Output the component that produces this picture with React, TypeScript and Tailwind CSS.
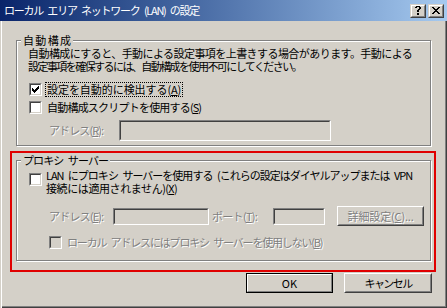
import React from "react";

// pixel glyphs for the classic check mark and caption buttons
const CHECK = ["......X", ".....XX", "X...XXX", "XX.XXX.", "XXXXX..", ".XXX...", "..X...."];
const CLOSE = ["XX....XX", ".XX..XX.", "..XXXX..", "...XX...", "..XXXX..", ".XX..XX.", "XX....XX"];
const HELP = [".XXXX.", "XX..XX", "....XX", "...XX.", "..XX..", "..XX..", "......", "..XX..", "..XX.."];

const Pixels = ({ rows }: { rows: string[] }) => (
  <svg width={rows[0].length} height={rows.length} shapeRendering="crispEdges">
    {rows.flatMap((r, y) =>
      r.split("").map((c, x) =>
        c === "X" ? <rect key={x + "-" + y} x={x} y={y} width={1} height={1} fill="#000" /> : null,
      ),
    )}
  </svg>
);

const Checkbox = ({ checked, disabled }: { checked?: boolean; disabled?: boolean }) => (
  <div className="h-[13px] w-[13px] shrink-0 border border-t-[#808080] border-l-[#808080] border-r-white border-b-white">
    <div
      className={
        "flex h-full w-full items-center justify-center border border-t-[#404040] border-l-[#404040] border-r-[#d4d0c8] border-b-[#d4d0c8] " +
        (disabled ? "bg-[#d4d0c8]" : "bg-white")
      }
    >
      {checked && <Pixels rows={CHECK} />}
    </div>
  </div>
);

const Edit = ({ className }: { className: string }) => (
  <div className={"shrink-0 border border-t-[#808080] border-l-[#808080] border-r-white border-b-white " + className}>
    <div className="h-full w-full border border-t-[#404040] border-l-[#404040] border-r-[#d4d0c8] border-b-[#d4d0c8] bg-[#d4d0c8]" />
  </div>
);

const Button = ({
  children,
  isDefault,
  className,
}: {
  children: React.ReactNode;
  isDefault?: boolean;
  className: string;
}) =>
  isDefault ? (
    <div className={"shrink-0 border border-black " + className}>
      <div className="h-full w-full border border-t-white border-l-white border-r-[#808080] border-b-[#808080]">
        <div className="flex h-full w-full items-center justify-center">{children}</div>
      </div>
    </div>
  ) : (
    <div className={"shrink-0 border border-t-white border-l-white border-r-[#404040] border-b-[#404040] " + className}>
      <div className="flex h-full w-full items-center justify-center border border-t-[#d4d0c8] border-l-[#d4d0c8] border-r-[#808080] border-b-[#808080]">
        {children}
      </div>
    </div>
  );

const CaptionButton = ({ children }: { children: React.ReactNode }) => (
  <div className="h-[14px] w-[16px] border border-t-[#d4d0c8] border-l-[#d4d0c8] border-r-[#404040] border-b-[#404040] bg-[#d4d0c8]">
    <div className="flex h-full w-full items-center justify-center border border-t-white border-l-white border-r-[#808080] border-b-[#808080]">
      {children}
    </div>
  </div>
);

const Group = ({
  label,
  className,
  children,
}: {
  label: React.ReactNode;
  className: string;
  children: React.ReactNode;
}) => (
  <div className={"relative border border-[#808080] shadow-[inset_1px_1px_0_#fff,1px_1px_0_#fff] " + className}>
    <div className="absolute left-[4px] top-[-7px] bg-[#d4d0c8] px-[2px] leading-[13px]">{label}</div>
    {children}
  </div>
);

export default function App() {
  return (
    <div className="flex h-[308px] w-[447px] flex-col bg-[#d4d0c8] font-['Noto_Sans_CJK_JP','Noto_Sans_CJK_SC',sans-serif] text-[11px] text-black">
      <div className="flex h-[21px] shrink-0 items-center bg-linear-to-r from-[#0a246a] to-[#a6caf0] pl-[4px] pr-[3px]">
        <div className="w-[195px] whitespace-nowrap leading-[13px] tracking-[-1.3px] text-white [word-spacing:3px] [text-align-last:justify]">
          ローカル エリア ネットワーク (LAN) の設定
        </div>
        <div className="ml-auto flex gap-[2px]">
          <CaptionButton>
            <Pixels rows={HELP} />
          </CaptionButton>
          <CaptionButton>
            <Pixels rows={CLOSE} />
          </CaptionButton>
        </div>
      </div>

      <div className="relative flex-1 shadow-[inset_1px_0_0_#d4d0c8,inset_2px_0_0_#fff,inset_-1px_-1px_0_#404040,inset_-2px_-2px_0_#808080]">
        <Group
          label={<div className="w-[48px] whitespace-nowrap [text-align-last:justify]">自動構成</div>}
          className="ml-[16px] mt-[19px] h-[106px] w-[415px]"
        >
          <div className="pl-[11px] pt-[6px]">
            <div className="leading-[13px]">
              <div className="w-[384px] whitespace-nowrap tracking-[-0.8px] [text-align-last:justify]">
                自動構成にすると、手動による設定事項を上書きする場合があります。手動による
              </div>
              <div className="w-[273px] whitespace-nowrap tracking-[-1.7px] [text-align-last:justify]">
                設定事項を確保するには、自動構成を使用不可にしてください。
              </div>
            </div>
            <div className="mt-[8px] flex h-[16px] items-center pl-[1px]">
              <Checkbox checked />
              <div className="ml-[3px] border border-dotted border-black px-[1px] leading-[13px]">
                <div className="w-[134px] whitespace-nowrap tracking-[-0.2px] [text-align-last:justify]">
                  設定を自動的に検出する(<u>A</u>)
                </div>
              </div>
            </div>
            <div className="mt-[2px] flex h-[16px] items-center pl-[1px]">
              <Checkbox />
              <div className="ml-[5px] w-[154px] whitespace-nowrap leading-[13px] tracking-[-1px] [text-align-last:justify]">
                自動構成スクリプトを使用する(<u>S</u>)
              </div>
            </div>
            <div className="mt-[5px] flex h-[21px] items-center pl-[21px]">
              <div className="w-[70px] leading-[13px]">
                <div className="w-[54px] whitespace-nowrap tracking-[-1px] text-[#808080] [text-shadow:1px_1px_0_#fff] [text-align-last:justify]">
                  アドレス(<u>R</u>):
                </div>
              </div>
              <Edit className="h-[21px] w-[212px]" />
            </div>
          </div>
        </Group>

        <Group
          label={
            <div className="w-[85px] whitespace-nowrap tracking-[-1px] [word-spacing:3px] [text-align-last:justify]">
              プロキシ サーバー
            </div>
          }
          className="ml-[16px] mt-[14px] h-[101px] w-[415px]"
        >
          <div className="pl-[11px] pt-[8px]">
            <div className="flex items-start pl-[1px]">
              <div className="mt-[4px]">
                <Checkbox />
              </div>
              <div className="ml-[4px] leading-[13px]">
                <div className="w-[366px] whitespace-nowrap tracking-[-1.1px] [word-spacing:3px] [text-align-last:justify]">
                  LAN にプロキシ サーバーを使用する (これらの設定はダイヤルアップまたは VPN
                </div>
                <div className="w-[131px] whitespace-nowrap tracking-[-0.7px] [text-align-last:justify]">
                  接続には適用されません)(<u>X</u>)
                </div>
              </div>
            </div>
            <div className="mt-[11px] flex h-[20px] items-center pl-[21px] text-[#808080] [text-shadow:1px_1px_0_#fff]">
              <div className="w-[64px] leading-[13px]">
                <div className="w-[54px] whitespace-nowrap tracking-[-1px] [text-align-last:justify]">
                  アドレス(<u>E</u>):
                </div>
              </div>
              <Edit className="h-[17px] w-[96px]" />
              <div className="ml-[3px] w-[61px] leading-[13px]">
                <div className="w-[45px] whitespace-nowrap tracking-[-0.7px] [text-align-last:justify]">
                  ポート(<u>T</u>):
                </div>
              </div>
              <Edit className="h-[17px] w-[52px]" />
              <Button className="ml-[12px] h-[20px] w-[87px]">
                <div className="w-[66px] whitespace-nowrap leading-[13px] tracking-[-0.2px] [text-align-last:justify]">
                  詳細設定(<u>C</u>)...
                </div>
              </Button>
            </div>
            <div className="mt-[8px] flex h-[16px] items-center pl-[21px]">
              <Checkbox disabled />
              <div className="ml-[5px] w-[255px] whitespace-nowrap leading-[13px] tracking-[-1.35px] text-[#808080] [word-spacing:3px] [text-shadow:1px_1px_0_#fff] [text-align-last:justify]">
                ローカル アドレスにはプロキシ サーバーを使用しない(<u>B</u>)
              </div>
            </div>
          </div>
        </Group>

        <div className="mt-[12px] flex justify-end gap-[11px] pr-[15px]">
          <Button isDefault className="h-[20px] w-[87px]">
            <span className="leading-[13px]">OK</span>
          </Button>
          <Button className="h-[20px] w-[88px]">
            <div className="w-[47px] whitespace-nowrap leading-[13px] tracking-[-1.7px] [text-align-last:justify]">
              キャンセル
            </div>
          </Button>
        </div>

        {/* red annotation frame drawn over the proxy group */}
        <div className="pointer-events-none absolute left-[10px] top-[130px] h-[121px] w-[426px] border-2 border-[#e00000]" />
      </div>
    </div>
  );
}
